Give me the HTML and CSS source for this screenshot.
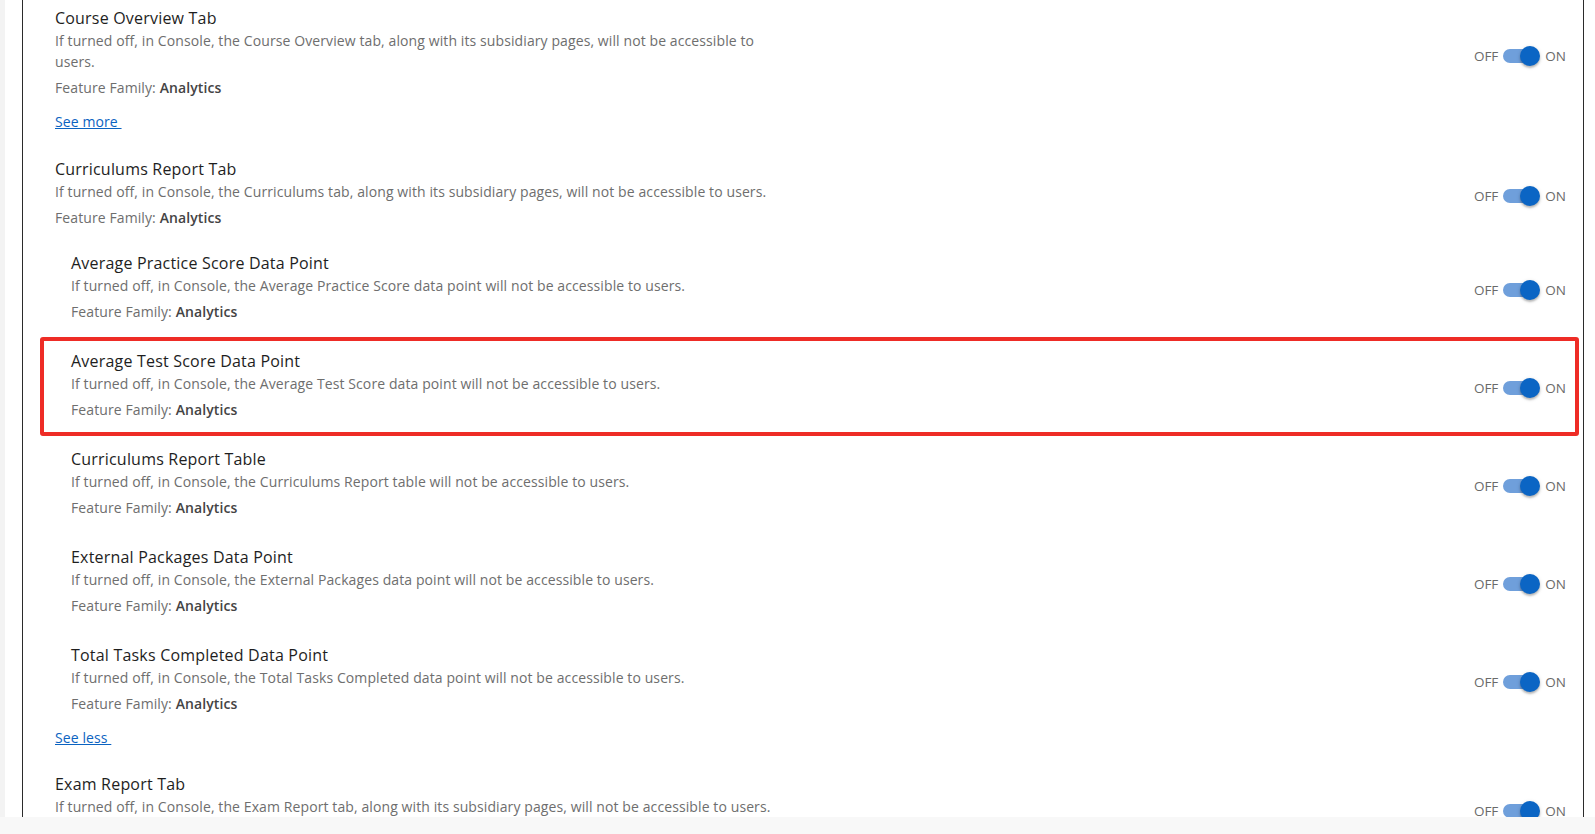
FILE: index.html
```html
<!DOCTYPE html>
<html lang="en">
<head>
<meta charset="utf-8">
<title>Feature settings</title>
<link rel="stylesheet" href="styles.css">
</head>
<body>
<div class="page">
  <div class="strip"></div>
  <main class="main">
    <div class="panel">

      <section class="group first">
        <div class="row">
          <div class="info">
            <div class="title">Course Overview Tab</div>
            <div class="desc">If turned off, in Console, the Course Overview tab, along with its subsidiary pages, will not be accessible to users.</div>
            <div class="family">Feature Family: <b>Analytics</b></div>
          </div>
          <div class="toggle"><span class="lbl">OFF</span><span class="switch"><span class="track"></span><span class="thumb"></span></span><span class="lbl">ON</span></div>
        </div>
        <a class="more" href="#">See more&nbsp;</a>
      </section>

      <section class="group">
        <div class="row">
          <div class="info">
            <div class="title">Curriculums Report Tab</div>
            <div class="desc">If turned off, in Console, the Curriculums tab, along with its subsidiary pages, will not be accessible to users.</div>
            <div class="family">Feature Family: <b>Analytics</b></div>
          </div>
          <div class="toggle"><span class="lbl">OFF</span><span class="switch"><span class="track"></span><span class="thumb"></span></span><span class="lbl">ON</span></div>
        </div>
        <div class="children">
          <div class="row">
            <div class="info">
              <div class="title">Average Practice Score Data Point</div>
              <div class="desc">If turned off, in Console, the Average Practice Score data point will not be accessible to users.</div>
              <div class="family">Feature Family: <b>Analytics</b></div>
            </div>
            <div class="toggle"><span class="lbl">OFF</span><span class="switch"><span class="track"></span><span class="thumb"></span></span><span class="lbl">ON</span></div>
          </div>
          <div class="row highlight">
            <div class="info">
              <div class="title">Average Test Score Data Point</div>
              <div class="desc">If turned off, in Console, the Average Test Score data point will not be accessible to users.</div>
              <div class="family">Feature Family: <b>Analytics</b></div>
            </div>
            <div class="toggle"><span class="lbl">OFF</span><span class="switch"><span class="track"></span><span class="thumb"></span></span><span class="lbl">ON</span></div>
          </div>
          <div class="row">
            <div class="info">
              <div class="title">Curriculums Report Table</div>
              <div class="desc">If turned off, in Console, the Curriculums Report table will not be accessible to users.</div>
              <div class="family">Feature Family: <b>Analytics</b></div>
            </div>
            <div class="toggle"><span class="lbl">OFF</span><span class="switch"><span class="track"></span><span class="thumb"></span></span><span class="lbl">ON</span></div>
          </div>
          <div class="row">
            <div class="info">
              <div class="title">External Packages Data Point</div>
              <div class="desc">If turned off, in Console, the External Packages data point will not be accessible to users.</div>
              <div class="family">Feature Family: <b>Analytics</b></div>
            </div>
            <div class="toggle"><span class="lbl">OFF</span><span class="switch"><span class="track"></span><span class="thumb"></span></span><span class="lbl">ON</span></div>
          </div>
          <div class="row">
            <div class="info">
              <div class="title">Total Tasks Completed Data Point</div>
              <div class="desc">If turned off, in Console, the Total Tasks Completed data point will not be accessible to users.</div>
              <div class="family">Feature Family: <b>Analytics</b></div>
            </div>
            <div class="toggle"><span class="lbl">OFF</span><span class="switch"><span class="track"></span><span class="thumb"></span></span><span class="lbl">ON</span></div>
          </div>
        </div>
        <a class="more" href="#">See less&nbsp;</a>
      </section>

      <section class="group last">
        <div class="row row-top">
          <div class="info">
            <div class="title">Exam Report Tab</div>
            <div class="desc">If turned off, in Console, the Exam Report tab, along with its subsidiary pages, will not be accessible to users.</div>
          </div>
          <div class="toggle toggle-low"><span class="lbl">OFF</span><span class="switch"><span class="track"></span><span class="thumb"></span></span><span class="lbl">ON</span></div>
        </div>
      </section>

    </div>
  </main>
</div>
<div class="bottom-band"></div>
</body>
</html>
```

FILE: styles.css
```css
html, body {
  margin: 0;
  padding: 0;
  height: 100%;
  overflow: hidden;
  background: #ffffff;
  font-family: "Open Sans", "Noto Sans", "Liberation Sans", sans-serif;
}

.page {
  display: flex;
  height: 100vh;
}

.strip {
  width: 5px;
  flex: none;
  background: #f3f3f3;
}

.main {
  flex: 1;
  padding: 0 11px 0 17px;
  display: flex;
}

.panel {
  flex: 1;
  border-left: 1px solid #2b2b2b;
  border-right: 1px solid #2b2b2b;
  padding: 7px 17px 0 32px;
}

.group {
  display: flex;
  flex-direction: column;
  align-items: flex-start;
  margin-top: 26px;
}

.group.first {
  margin-top: 0;
}

.group.last {
  margin-top: 25px;
}

.row {
  position: relative;
  display: flex;
  align-items: center;
  justify-content: space-between;
  align-self: stretch;
}

.row-top {
  align-items: flex-start;
}

.info {
  max-width: 730px;
}

.title {
  font-size: 16px;
  line-height: 23px;
  letter-spacing: 0.2px;
  color: #1e1e1e;
}

.desc {
  font-size: 14px;
  line-height: 21px;
  letter-spacing: 0.1px;
  color: #6e6e6e;
}

.family {
  margin-top: 5px;
  font-size: 14px;
  line-height: 21px;
  letter-spacing: 0.1px;
  color: #6e6e6e;
}

.family b {
  font-weight: 600;
  color: #444444;
}

.children {
  align-self: stretch;
  margin-top: 24px;
  padding-left: 16px;
  display: flex;
  flex-direction: column;
  gap: 28px;
}

.more {
  margin-top: 13px;
  font-size: 14px;
  line-height: 21px;
  letter-spacing: 0.1px;
  color: #0b63c1;
  text-decoration: underline;
}

.toggle {
  display: flex;
  align-items: center;
  margin-top: 6px;
  font-size: 13.5px;
  color: #6a6a6a;
}

.toggle-low {
  margin-top: 28px;
}

.switch {
  position: relative;
  width: 37px;
  height: 20px;
  margin: 0 5px 0 5px;
}

.track {
  position: absolute;
  left: 0;
  top: 3px;
  width: 34px;
  height: 14px;
  border-radius: 7px;
  background: #6f9fdb;
}

.thumb {
  position: absolute;
  left: 17px;
  top: 0;
  width: 20px;
  height: 20px;
  border-radius: 50%;
  background: #0b65c4;
  box-shadow: 0 2px 2px rgba(0, 0, 0, 0.22), 0 1px 4px rgba(0, 0, 0, 0.14);
}

.highlight::after {
  content: "";
  position: absolute;
  left: -31px;
  top: -13px;
  right: -13px;
  bottom: -16px;
  border: 4px solid #ee2c26;
  border-radius: 3px;
  pointer-events: none;
}

.bottom-band {
  position: fixed;
  left: 0;
  right: 0;
  bottom: 0;
  height: 17px;
  background: #f8f8f8;
}
```
